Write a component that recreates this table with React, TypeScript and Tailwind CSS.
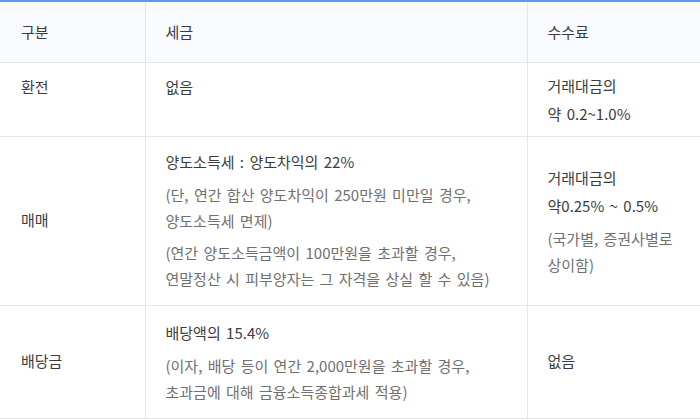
import React from "react";

type Block = { text: string[]; sub?: boolean };

const font = { fontFamily: '"Noto Sans CJK KR", "Noto Sans", sans-serif' };

function Cell({ blocks }: { blocks: Block[] }) {
  return (
    <div className="flex flex-col gap-[6px]">
      {blocks.map((b, i) => (
        <p
          key={i}
          className={
            b.sub
              ? "text-[15px] leading-[26px] text-[#707070]"
              : "text-[15px] leading-[28px] text-[#3c3c3c]"
          }
        >
          {b.text.map((line, j) => (
            <span key={j} className="block whitespace-nowrap">
              {line}
            </span>
          ))}
        </p>
      ))}
    </div>
  );
}

export default function App() {
  return (
    <div
      className="w-[700px] h-[420px] bg-white overflow-hidden [word-spacing:2px]"
      style={font}
    >
      <table className="w-[700px] border-collapse table-fixed border-t-2 border-t-[#5b9bf0]">
        <colgroup>
          <col className="w-[145px]" />
          <col className="w-[382px]" />
          <col className="w-[173px]" />
        </colgroup>
        <thead>
          <tr className="h-[61px] bg-[#f8fafd] border-b border-[#e3e6ea] text-left">
            <th className="pl-[21px] font-normal text-[15px] text-[#3c3c3c] border-r border-[#e3e6ea]">
              구분
            </th>
            <th className="pl-5 font-normal text-[15px] text-[#3c3c3c] border-r border-[#e3e6ea]">
              세금
            </th>
            <th className="pl-5 font-normal text-[15px] text-[#3c3c3c]">수수료</th>
          </tr>
        </thead>
        <tbody>
          <tr className="h-[74px] border-b border-[#e3e6ea]">
            <td className="align-top pt-[10px] pl-[21px] text-[15px] leading-[28px] text-[#3c3c3c] border-r border-[#e3e6ea]">
              환전
            </td>
            <td className="align-top pt-[10px] pl-5 border-r border-[#e3e6ea]">
              <Cell blocks={[{ text: ["없음"] }]} />
            </td>
            <td className="align-top pt-[9px] pl-5">
              <Cell blocks={[{ text: ["거래대금의", "약 0.2~1.0%"] }]} />
            </td>
          </tr>
          <tr className="h-[169px] border-b border-[#e3e6ea]">
            <td className="align-middle pl-[21px] text-[15px] text-[#3c3c3c] border-r border-[#e3e6ea]">
              매매
            </td>
            <td className="align-middle pl-5 pb-[2px] border-r border-[#e3e6ea]">
              <Cell
                blocks={[
                  { text: ["양도소득세 : 양도차익의 22%"] },
                  {
                    text: [
                      "(단, 연간 합산 양도차익이 250만원 미만일 경우,",
                      "양도소득세 면제)",
                    ],
                    sub: true,
                  },
                  {
                    text: [
                      "(연간 양도소득금액이 100만원을 초과할 경우,",
                      "연말정산 시 피부양자는 그 자격을 상실 할 수 있음)",
                    ],
                    sub: true,
                  },
                ]}
              />
            </td>
            <td className="align-middle pl-5">
              <Cell
                blocks={[
                  { text: ["거래대금의", "약0.25% ~ 0.5%"] },
                  { text: ["(국가별, 증권사별로", "상이함)"], sub: true },
                ]}
              />
            </td>
          </tr>
          <tr className="h-[113px] border-b border-[#e3e6ea]">
            <td className="align-middle pl-[21px] text-[15px] text-[#3c3c3c] border-r border-[#e3e6ea]">
              배당금
            </td>
            <td className="align-middle pl-5 border-r border-[#e3e6ea]">
              <Cell
                blocks={[
                  { text: ["배당액의 15.4%"] },
                  {
                    text: [
                      "(이자, 배당 등이 연간 2,000만원을 초과할 경우,",
                      "초과금에 대해 금융소득종합과세 적용)",
                    ],
                    sub: true,
                  },
                ]}
              />
            </td>
            <td className="align-middle pl-5 text-[15px] text-[#3c3c3c]">없음</td>
          </tr>
        </tbody>
      </table>
    </div>
  );
}
